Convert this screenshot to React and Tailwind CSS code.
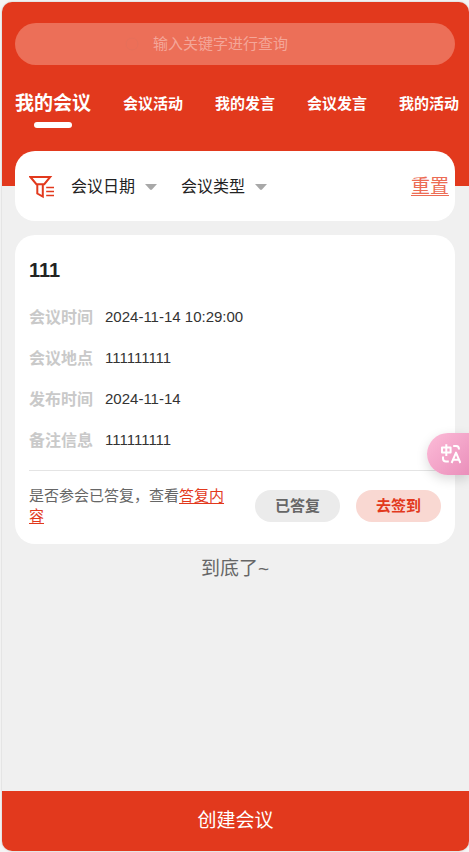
import React from "react";

const tabs = ["会议活动", "我的发言", "会议发言", "我的活动"];

const details = [
  ["会议时间", "2024-11-14 10:29:00"],
  ["会议地点", "111111111"],
  ["发布时间", "2024-11-14"],
  ["备注信息", "111111111"],
];

function FilterIcon() {
  return (
    <svg className="h-6 w-7 shrink-0" viewBox="0 0 28 24" fill="none" stroke="#e2391d" strokeWidth="2" aria-hidden="true">
      <path d="M1.4 2H21.2L15.3 9.2H7.4Z" />
      <path d="M8.3 9.2V18.5L13.8 21.6V9.2" />
      <path d="M17.2 12.5H25M17.2 16.5H25M17.2 20.5H25" strokeWidth="1.7" />
    </svg>
  );
}

function FilterButton({ children }) {
  return (
    <button type="button" className="flex items-center gap-2.5 text-base text-[#222]">
      {children}
      <svg className="h-1.5 w-3" viewBox="0 0 12 6" fill="#a8a8a8" aria-hidden="true">
        <path d="M0 0H12L7 5.5Q6 6.4 5 5.5Z" />
      </svg>
    </button>
  );
}

function TranslateIcon() {
  return (
    <svg className="h-5 w-5" viewBox="0 0 20 20" fill="none" stroke="#fff" strokeWidth="2" strokeLinejoin="round" aria-hidden="true">
      <path d="M1 3.4H9.6V8.6H1ZM5.3 0.2V12" />
      <path d="M12.2 2H15Q18 2 18 5.4" />
      <path d="M2 12.6V14.5Q2 17.6 5 17.6H7.8" />
      <path d="M10.6 19L15 8.6L19.4 19M12.2 15.8H17.8" />
    </svg>
  );
}

export default function App() {
  return (
    <div className="flex min-h-screen flex-col bg-[#f5f5f5] pt-0.5 pb-px pl-0.5 font-['Liberation_Sans','Noto_Sans_CJK_SC',sans-serif]">
      <div className="flex flex-1 flex-col overflow-hidden rounded-[10px] bg-[#f0f0f0] shadow-[0_0_2px_#bbb]">
        <header className="bg-[#e2391d] pt-[21px] pr-3.5 pb-[50px] pl-[13px]">
          <label className="flex h-[42px] items-center gap-3.5 rounded-full bg-[#ec6f58] pl-[25%]">
            <svg className="h-3.5 w-3.5 shrink-0" viewBox="0 0 14 14" fill="none" stroke="#e5705b" aria-hidden="true">
              <circle cx="7" cy="7" r="6" />
            </svg>
            <input
              type="text"
              aria-label="查询"
              placeholder="输入关键字进行查询"
              className="min-w-0 flex-1 bg-transparent text-[15px] text-white outline-none placeholder:text-[#f4a698]"
            />
          </label>
          <nav className="-mr-1 flex h-[71px] items-start justify-between pt-[25px] text-white">
            <button type="button" className="flex flex-col items-center gap-1 text-[19px] leading-7 font-bold whitespace-nowrap">
              我的会议
              <span className="h-1.5 w-[38px] rounded-[3px] bg-white" />
            </button>
            {tabs.map((t) => (
              <button key={t} type="button" className="text-[15px] leading-7 font-bold whitespace-nowrap">
                {t}
              </button>
            ))}
          </nav>
        </header>

        <main className="-mt-[35px] flex flex-1 flex-col pr-3.5 pl-[13px]">
          <section className="flex h-[70px] items-center rounded-[20px] bg-white pt-0.5 pr-1.5 pl-3.5">
            <FilterIcon />
            <div className="ml-3.5 flex gap-6">
              <FilterButton>会议日期</FilterButton>
              <FilterButton>会议类型</FilterButton>
            </div>
            <button type="button" className="ml-auto text-[19px] text-[#ec6c54] underline decoration-1 underline-offset-2">
              重置
            </button>
          </section>

          <article className="mt-3.5 rounded-[20px] bg-white px-3.5 pt-[23px] pb-[18px]">
            <h2 className="text-xl leading-6 font-bold text-[#222]">111</h2>
            <dl className="mt-[15px] pb-[9px]">
              {details.map(([label, value]) => (
                <div key={label} className="flex h-[41px] items-center gap-3">
                  <dt className="text-base font-bold text-[#c9c9c9]">{label}</dt>
                  <dd className="text-[15px] text-[#333]">{value}</dd>
                </div>
              ))}
            </dl>
            <div className="flex items-center gap-4 border-t border-[#e4e4e4] pt-[15px]">
              <p className="mr-2 flex-1 text-[15px] leading-5 text-[#666]">
                是否参会已答复，查看
                <a href="#reply" className="text-[#e2391d] underline decoration-1 underline-offset-2">答复内容</a>
              </p>
              <button type="button" className="h-8 w-[85px] rounded-full bg-[#ebebeb] text-[15px] font-bold text-[#666]">
                已答复
              </button>
              <button type="button" className="h-8 w-[85px] rounded-full bg-[#f9d8d2] text-[15px] font-bold text-[#e2391d]">
                去签到
              </button>
            </div>
          </article>

          <p className="mt-[11px] text-center text-[19px] leading-7 text-[#666]">到底了~</p>
        </main>

        <button type="button" className="h-[60px] bg-[#e2391d] text-[19px] text-white">
          创建会议
        </button>
      </div>

      <button
        type="button"
        aria-label="翻译"
        className="fixed top-[433px] right-0 flex h-[42px] w-[42px] items-center rounded-l-full bg-linear-to-br from-[#fcbcd8] to-[#ea8fbb] pl-3.5 shadow-[0_4px_12px_rgba(0,0,0,0.15)]"
      >
        <TranslateIcon />
      </button>
    </div>
  );
}
